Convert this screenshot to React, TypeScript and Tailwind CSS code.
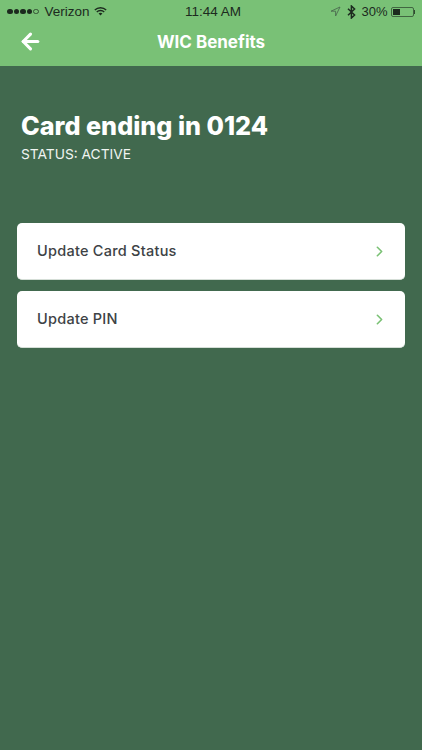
import { ArrowLeft, ChevronRight } from "lucide-react";

const montserrat = "font-['Inter','Open_Sans',sans-serif]";

const StatusBar = () => (
  <div className="h-[22px] pt-[1px] flex items-center justify-between pl-[7px] pr-[6px] text-[13.5px] leading-none text-[#1c2a1e] font-['Liberation_Sans',sans-serif]">
    <div className="flex-1 flex items-center">
      <div className="flex items-center gap-[1px]">
        {[0, 1, 2, 3].map((i) => (
          <span key={i} className="w-[5.5px] h-[5.5px] rounded-full bg-[#1c2a1e]" />
        ))}
        <span className="w-[5.5px] h-[5.5px] rounded-full border border-[#1c2a1e]/70" />
      </div>
      <span className="ml-[6px]">Verizon</span>
      <svg width="13" height="11" viewBox="0 0 16 12" className="ml-[4px]">
        <path d="M1 4.2a10 10 0 0 1 14 0" fill="none" stroke="#1c2a1e" strokeWidth="1.7" />
        <path d="M3.4 6.6a6.6 6.6 0 0 1 9.2 0" fill="none" stroke="#1c2a1e" strokeWidth="1.7" />
        <path d="M5.6 8.6 8 11l2.4-2.4a3.4 3.4 0 0 0-4.8 0z" fill="#1c2a1e" />
      </svg>
    </div>
    <span className="font-medium ml-[3px]">11:44 AM</span>
    <div className="flex-1 flex items-center justify-end">
      <svg width="11" height="11" viewBox="0 0 11 11">
        <path d="M10 1 1 5.2h4.6V10z" fill="none" stroke="#4c6b50" strokeWidth="0.9" strokeLinejoin="round" />
      </svg>
      <svg width="9" height="14" viewBox="0 0 9 14" className="ml-[6px]">
        <path d="M1 3.8 7.6 10 4.4 13V1l3.2 3L1 10.2" fill="none" stroke="#1c2a1e" strokeWidth="1.5" />
      </svg>
      <span className="ml-[5px] text-[13px]">30%</span>
      <div className="ml-[3px] mr-[1px] flex items-center">
        <div className="w-[23px] h-[10px] border border-[#1c2a1e]/60 rounded-[2px] p-[1px]">
          <div className="w-[7px] h-full bg-[#1c2a1e]" />
        </div>
        <div className="w-[1.5px] h-[4px] bg-[#1c2a1e]/80" />
      </div>
    </div>
  </div>
);

const MenuRow = ({ label }: { label: string }) => (
  <div className="h-[57px] bg-white rounded-[5px] border-b border-[#d5ded7] flex items-center justify-between pl-[20px] pr-[17px]">
    <span className={`${montserrat} text-[14.5px] font-[450] tracking-[0.25px] text-[#3d4245]`}>{label}</span>
    <ChevronRight size={17} strokeWidth={2.3} className="text-[#7ac174]" />
  </div>
);

export default function App() {
  return (
    <div className="w-[422px] h-[750px] bg-[#41694e] overflow-hidden flex flex-col">
      <div className="h-[66px] bg-[#79c176] shrink-0">
        <StatusBar />
        <div className="h-[42px] relative flex items-center justify-center">
          <ArrowLeft size={25} strokeWidth={3} className="absolute left-[18px] top-[7px] text-white" />
          <span className={`${montserrat} text-[17px] font-bold text-white`}>WIC Benefits</span>
        </div>
      </div>
      <div className="pt-[45px] pl-[21px]">
        <h1 className={`${montserrat} text-[25.2px] leading-[30px] font-extrabold text-white`}>Card ending in 0124</h1>
        <p className={`${montserrat} mt-[4px] text-[13.75px] leading-[18px] font-normal text-[#f0f4f1]`}>STATUS: ACTIVE</p>
      </div>
      <div className="mt-[60px] mx-[17px] flex flex-col gap-[11px]">
        <MenuRow label="Update Card Status" />
        <MenuRow label="Update PIN" />
      </div>
    </div>
  );
}
